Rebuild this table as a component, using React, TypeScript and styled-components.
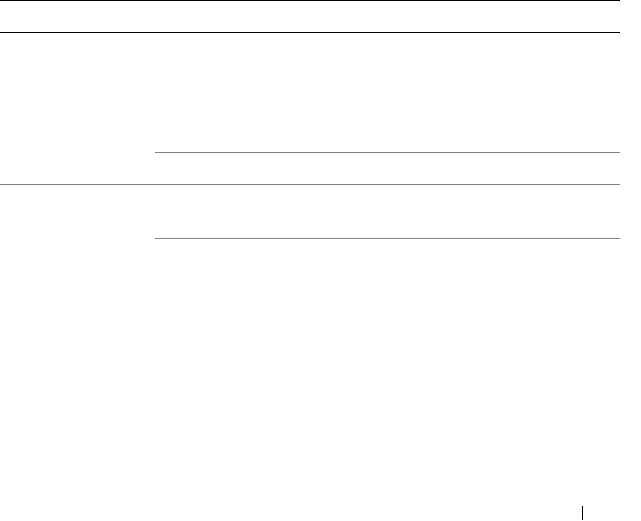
import React from "react";
import styled, { createGlobalStyle } from "styled-components";

const Global = createGlobalStyle`
  html, body { margin: 0; padding: 0; background: #ffffff; }
  body { font-family: "Liberation Sans", Arial, sans-serif; }
`;

const Page = styled.div`
  width: 641px;
  height: 521px;
  position: relative;
  background: #fff;
`;

const Table = styled.div`
  width: 620px;
  display: flex;
  flex-direction: column;
`;

const HeaderRow = styled.div`
  height: 31px;
  border-top: 1px solid #000;
  border-bottom: 1px solid #000;
`;

const Group = styled.div<{ $last?: boolean }>`
  display: grid;
  grid-template-columns: 155px 1fr;
  border-bottom: ${(p) => (p.$last ? "none" : "1px solid #808080")};
`;

const LeftCell = styled.div``;

const SubRows = styled.div`
  display: flex;
  flex-direction: column;
`;

const SubRow = styled.div<{ $h: number; $line?: boolean }>`
  height: ${(p) => p.$h}px;
  border-bottom: ${(p) => (p.$line ? "1px solid #808080" : "none")};
`;

const Footer = styled.div`
  position: absolute;
  left: 582px;
  top: 506px;
  width: 1px;
  height: 14px;
  background: #000;
`;

export default function App() {
  return (
    <Page>
      <Global />
      <Table>
        <HeaderRow />
        <Group>
          <LeftCell />
          <SubRows>
            <SubRow $h={119} $line />
            <SubRow $h={31} />
          </SubRows>
        </Group>
        <Group $last>
          <LeftCell />
          <SubRows>
            <SubRow $h={53} $line />
          </SubRows>
        </Group>
      </Table>
      <Footer />
    </Page>
  );
}
